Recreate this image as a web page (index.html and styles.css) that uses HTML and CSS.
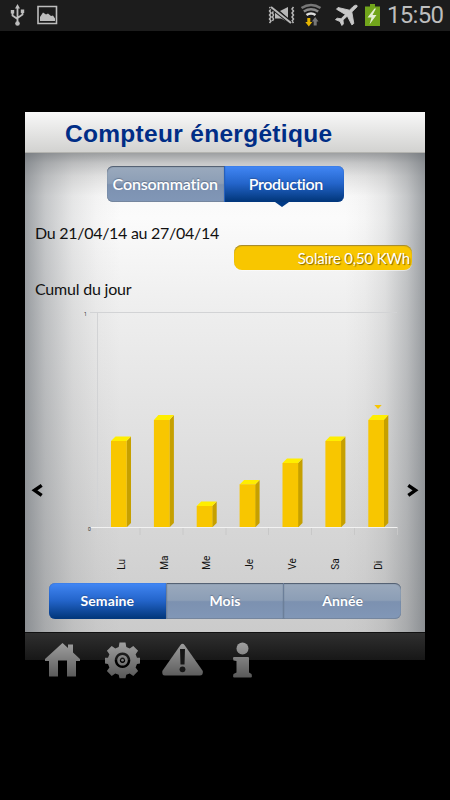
FILE: index.html
```html
<!DOCTYPE html>
<html lang="fr">
<head>
  <meta charset="UTF-8">
  <meta name="viewport" content="width=450, initial-scale=1.0">
  <title>Compteur énergétique</title>
  <link rel="stylesheet" href="styles.css">
</head>
<body>
  <div class="status-bar">
    <svg class="status-left" viewBox="0 0 70 31" width="70" height="31">
      <g fill="none" stroke="#bdbdbd" stroke-width="1.8">
        <path d="M17.5 7v15M12.500 12v3.500l5 3.500M22.500 11v3.500l-5 3.500"/>
        <path d="M38 6.500h18.500v17H38z" stroke-width="1.600"/>
      </g>
      <path fill="#bdbdbd" d="M17.500 4l2.500 4.500h-5zM10.800 10h3.400v3.400h-3.400zM20.800 9.500h3.400v3.400h-3.400z"/>
      <circle cx="17.500" cy="23.500" r="2.300" fill="#bdbdbd"/>
      <path fill="#bdbdbd" d="M40 21v-4l3-4.500 3 2 2-1 3 2.500 2-.5 2 3V21z"/>
    </svg>
    <div class="status-right">
      <svg viewBox="265 0 120 31" width="120" height="31">
        <g fill="none" stroke="#b8b8b8" stroke-width="1.500">
          <path d="M269.500 7l1.500 2-1.500 2 1.500 2-1.500 2 1.500 2-1.500 2 1.500 2-1.500 2M273.500 11l-1 2 1 2-1 2 1 2-1 2M293.500 7l-1.500 2 1.500 2-1.500 2 1.500 2-1.500 2 1.500 2-1.500 2 1.500 2"/>
        </g>
        <path fill="#b8b8b8" d="M275 12h4l9 7v3l-7-3.500h-6zM280 11l8-4v11z"/>
        <path d="M271 7l20 16" stroke="#1c1c1c" stroke-width="4"/>
        <path d="M271 7l20 16" stroke="#b8b8b8" stroke-width="2"/>
        <g fill="none" stroke-width="2.600">
          <path d="M301.500 8q9.500-6 19 0" stroke="#777"/>
          <path d="M303.800 11.500q7.200-4.500 14.400 0" stroke="#888"/>
          <path d="M306.500 15q4.500-3 9 0" stroke="#ddd"/>
        </g>
        <path fill="#e5b400" d="M307.300 18h3v4h2l-3.500 4.500-3.500-4.500h2z"/>
        <path fill="#777" d="M313.700 25.500h3v-4h1.800l-3.300-4.500-3.300 4.500h1.800z"/>
        <path fill="#c8c8c8" stroke="#c8c8c8" stroke-width=".9" stroke-linejoin="round" d="M357 5.500c-1.500-1-3.500.5-5.500 2.700l-2 2-11.500-2.700-1.500 1.700 8.800 5.300-4.300 4.300-3.800-.6-1.700 1.400 4.500 1.900 1.900 4 1.500-1.600-.4-3.800 4.300-4 4.600 8.800 1.900-1.500-2-11.500 2.500-2.300c2-1.800 3.500-3.100 2.700-4.100z"/>
        <path fill="#71a51b" d="M365 6.500h5V4h5v2.500h5V26h-15z"/>
        <path fill="#e4eed4" d="M374.500 8.500l-7 9h4l-2 7 7-9.500h-4l3.500-6.500z"/>
      </svg>
      <span class="clock">15:50</span>
    </div>
  </div>

  <div class="app">
    <header class="title-bar">
      <h1>Compteur énergétique</h1>
    </header>

    <main class="content">
      <div class="tabs tabs-top">
        <a class="tab conso">Consommation</a>
        <a class="tab prod active">Production</a>
      </div>

      <p class="period">Du 21/04/14 au 27/04/14</p>
      <div class="badge">Solaire 0,50 KWh</div>
      <p class="subtitle">Cumul du jour</p>

      <svg class="chart" viewBox="25 303 400 280" width="400" height="280">
        <defs>
          <path id="arrow" d="M10.200 1L3 6l7.200 5" fill="none" stroke="#000" stroke-width="3.400"/>
        </defs>
        <g stroke="#d2d3d5" fill="none">
          <path d="M90 312.500H397M97.500 312v223"/>
          <path stroke="#c8c8c8" d="M140 528v7M183 528v7M226 528v7M268.500 528v7M311.500 528v7M354.500 528v7M397.500 528v7"/>
        </g>
        <g class="scale">
          <text x="84" y="315.500">1</text>
          <text x="88" y="531">0</text>
        </g>
        <!-- right side of the bars -->
        <g fill="#c6a000">
          <path d="M126.500 441l4.500-4.500v86.500l-4.500 4.500z"/>
          <path d="M169.400 420l4.500-5v108l-4.500 4.500z"/>
          <path d="M212.200 506l4.500-4.500V523l-4.500 4.500z"/>
          <path d="M255.100 484.500l4.500-4.500v43l-4.500 4.500z"/>
          <path d="M298 463l4.500-4.500V523l-4.500 4.500z"/>
          <path d="M340.900 441l4.500-4.500V523l-4.500 4.500z"/>
          <path d="M383.800 420l4.500-5v108l-4.500 4.500z"/>
        </g>
        <!-- top -->
        <g fill="#ffee00">
          <path d="M111 441l4.500-4.500H131l-4.500 4.500z"/>
          <path d="M153.900 420l4.500-5h15.500l-4.500 5z"/>
          <path d="M196.700 506l4.500-4.500h15.500l-4.500 4.500z"/>
          <path d="M239.600 484.500l4.500-4.500h15.500l-4.500 4.500z"/>
          <path d="M282.500 463l4.500-4.500h15.500l-4.500 4.500z"/>
          <path d="M325.400 441l4.500-4.500h15.500l-4.500 4.500z"/>
          <path d="M368.300 420l4.500-5h15.500l-4.500 5z"/>
        </g>
        <!-- front -->
        <g fill="#f8c600">
          <rect x="111" y="441" width="15.700" height="86.500"/>
          <rect x="153.900" y="420" width="15.700" height="107.500"/>
          <rect x="196.700" y="506" width="15.700" height="21.500"/>
          <rect x="239.600" y="484.300" width="15.700" height="43.200"/>
          <rect x="282.500" y="463" width="15.700" height="64.500"/>
          <rect x="325.400" y="441" width="15.700" height="86.500"/>
          <rect x="368.300" y="420" width="15.700" height="107.500"/>
          <path d="M374.300 405h7.400l-3.700 3.900z"/>
        </g>
        <path d="M91 527.500h306.500" stroke="#f2f2f2"/>
        <g class="days">
          <text transform="translate(124.500 569.700) rotate(-90)">Lu</text>
          <text transform="translate(167.500 569.700) rotate(-90)">Ma</text>
          <text transform="translate(210.300 569.700) rotate(-90)">Me</text>
          <text transform="translate(253.300 569.700) rotate(-90)">Je</text>
          <text transform="translate(296 569.700) rotate(-90)">Ve</text>
          <text transform="translate(339 569.700) rotate(-90)">Sa</text>
          <text transform="translate(382 569.700) rotate(-90)">Di</text>
        </g>
        <use href="#arrow" x="31.500" y="484.300"/>
        <use href="#arrow" transform="translate(418.500 484.300) scale(-1 1)"/>
      </svg>

      <div class="tabs tabs-bottom">
        <a class="tab active">Semaine</a>
        <a class="tab">Mois</a>
        <a class="tab">Année</a>
      </div>
    </main>

    <footer class="toolbar">
      <svg viewBox="25 632 400 50" width="400" height="50">
        <defs>
          <linearGradient id="metal" gradientUnits="userSpaceOnUse" x1="0" y1="642" x2="0" y2="678">
            <stop offset="0" stop-color="#a0a0a0"/>
            <stop offset="1" stop-color="#585858"/>
          </linearGradient>
        </defs>
        <g fill="url(#metal)">
          <path d="M62.500 643l5.500 5v-3.500h5v8l7 6.500v2h-4v15q0 .500-.5.500H67v-16h-9v16h-8.500q-.5 0-.5-.5v-15h-4v-2z"/>
          <path fill-rule="evenodd" d="M119.500 642.500h6l.8 4.500 3.400 1.400 3.600-2.500 4.800 4.800-2.500 3.600 1.400 3.400h3v5.800l-3 .6-1.400 3.400 2.500 3.600-4.800 4.800-3.600-2.500-3.400 1.400-.8 3.400h-6l-.8-3.400-3.400-1.400-3.600 2.500-4.800-4.800 2.500-3.600-1.400-3.400-3-.6v-5.800h3l1.400-3.400-2.500-3.600 4.800-4.800 3.600 2.500 3.400-1.400zM122.500 652.500a7.800 7.800 0 1 0 .01 0z"/>
          <path fill-rule="evenodd" d="M122.500 655a5.300 5.300 0 1 0 .01 0zm0 2.600a2.700 2.700 0 1 1-.01 0z"/>
          <circle cx="122.500" cy="660.300" r="1.300"/>
          <path d="M180.500 645q2-2.500 4 0l18.300 26q.5 4.500-3 4.500h-35q-3 0-2.500-4.500z"/>
          <circle cx="242.500" cy="648.500" r="6"/>
          <path d="M233.500 657H248q1 0 1 1v14.500l2.500 1.500q1 3.500-.5 3.500h-17q-1.500 0-.5-3.500l3-1.500v-11.500l-3-.5q-1-3 0-3.500z"/>
        </g>
        <path d="M180 649h5l-.5 15.500h-4z" fill="#161616"/>
        <circle cx="182.500" cy="669.300" r="2.900" fill="#161616"/>
      </svg>
    </footer>
  </div>
</body>
</html>
```

FILE: styles.css
```css
* {
  margin: 0;
  padding: 0;
  box-sizing: border-box;
}

body {
  width: 450px;
  height: 800px;
  overflow: hidden;
  background: #000;
  font-family: Lato, "Open Sans", sans-serif;
}

.status-bar {
  height: 31px;
  display: flex;
  justify-content: space-between;
  background: #1c1c1c;
}

.status-right {
  display: flex;
  padding-right: 6px;
}

.status-right svg {
  margin-right: 2px;
}

.clock {
  width: 57px;
  font: 24px/31px Roboto, sans-serif;
  letter-spacing: -0.7px;
  color: #bebebe;
  white-space: nowrap;
}

.app {
  width: 400px;
  height: 548px;
  margin: 81px auto 0;
}

.title-bar {
  height: 41px;
  padding-left: 40px;
  background: linear-gradient(#f8f8f8, #d2d2d0);
  border-bottom: 1px solid #b4b4b0;
}

.title-bar h1 {
  font: bold 24.5px/43px "Liberation Sans", Arial, sans-serif;
  letter-spacing: 0.3px;
  color: #002d86;
  white-space: nowrap;
}

.content {
  height: 479px;
  display: flex;
  flex-direction: column;
  background:
    linear-gradient(90deg, rgba(100,106,112,0.62), rgba(110,115,120,0.38) 5%, rgba(125,128,130,0.16) 12%, rgba(130,130,130,0.05) 18%, transparent 24%, transparent 80%, rgba(130,130,130,0.05) 85%, rgba(125,128,130,0.16) 90%, rgba(110,115,120,0.38) 95.500%, rgba(100,106,112,0.62)),
    linear-gradient(#9d9fa1 0, #c6c7c8 10px, #e4e4e4 23px, #f9f9f9 43px, #fbfbfb 65px, #efefef 150px, #d8d8d8 360px, #cbcbcb 100%);
}

.tabs {
  display: flex;
  height: 36px;
}

.tab {
  flex: 1;
  text-align: center;
  line-height: 36px;
  color: #fff;
  background: linear-gradient(#9baabd, #8c9eb6 48%, #7c91b0 52%, #8197b7);
  box-shadow: inset 0 1px 1px #4e5a6c, inset 0 -1px 0 #75869e;
  text-shadow: 0 -1px 1px rgba(40,55,80,0.4);
}

.tab:first-child {
  border-radius: 6px 0 0 6px;
}

.tab:last-child {
  border-radius: 0 6px 6px 0;
}

.tab + .tab {
  border-left: 1px solid #6c7f9a;
}

.tab.active {
  position: relative;
  background: linear-gradient(#4287f5, #2465cb 48%, #003578);
  box-shadow: inset 0 0 1px #15499c;
}

.tab + .tab.active {
  border-left-color: #2760bb;
}

.tabs-top {
  width: 237px;
  margin: 13px 0 0 82px;
  font-size: 16px;
  font-weight: 600;
}

.tabs-top .tab {
  line-height: 35px;
}

.conso {
  letter-spacing: -0.15px;
}

.prod {
  letter-spacing: -0.4px;
  padding-left: 3px;
}

/* pointer under the selected tab */
.tabs-top .active::after {
  content: "";
  position: absolute;
  top: 36px;
  left: 50px;
  border: 7px solid transparent;
  border-top: 5px solid #003a86;
  border-bottom: 0;
}

.period,
.subtitle {
  height: 22px;
  margin-left: 10px;
  font-size: 16px;
  line-height: 22px;
  color: #111;
  white-space: nowrap;
}

.period {
  margin-top: 20px;
  letter-spacing: -0.28px;
}

.badge {
  width: 178px;
  height: 25px;
  margin: 1px 0 0 209px;
  padding-right: 2px;
  border-radius: 8px;
  background: #f8c600;
  box-shadow: inset 0 1px 1px #9f8734, 0 1px 0 rgba(255,255,255,0.5);
  font-size: 15px;
  line-height: 27px;
  letter-spacing: -0.18px;
  text-align: right;
  color: #fff;
  text-shadow: 1px 1px 1px #806500;
  white-space: nowrap;
}

.subtitle {
  margin-top: 8px;
  line-height: 21px;
  letter-spacing: -0.2px;
}

.chart {
  display: block;
  margin-top: 3px;
  flex: none;
}

.scale text {
  font: 5px Roboto, sans-serif;
  fill: #333;
}

.days text {
  font: 10px Roboto, sans-serif;
  fill: #111;
}

.tabs-bottom {
  width: 352px;
  margin-left: 24px;
  font-size: 14px;
  font-weight: bold;
  letter-spacing: 0.1px;
}

.toolbar {
  height: 28px;
  background: linear-gradient(#303030, #171717);
  box-shadow: inset 0 1px 0 #111;
}

.toolbar svg {
  display: block;
}
```
